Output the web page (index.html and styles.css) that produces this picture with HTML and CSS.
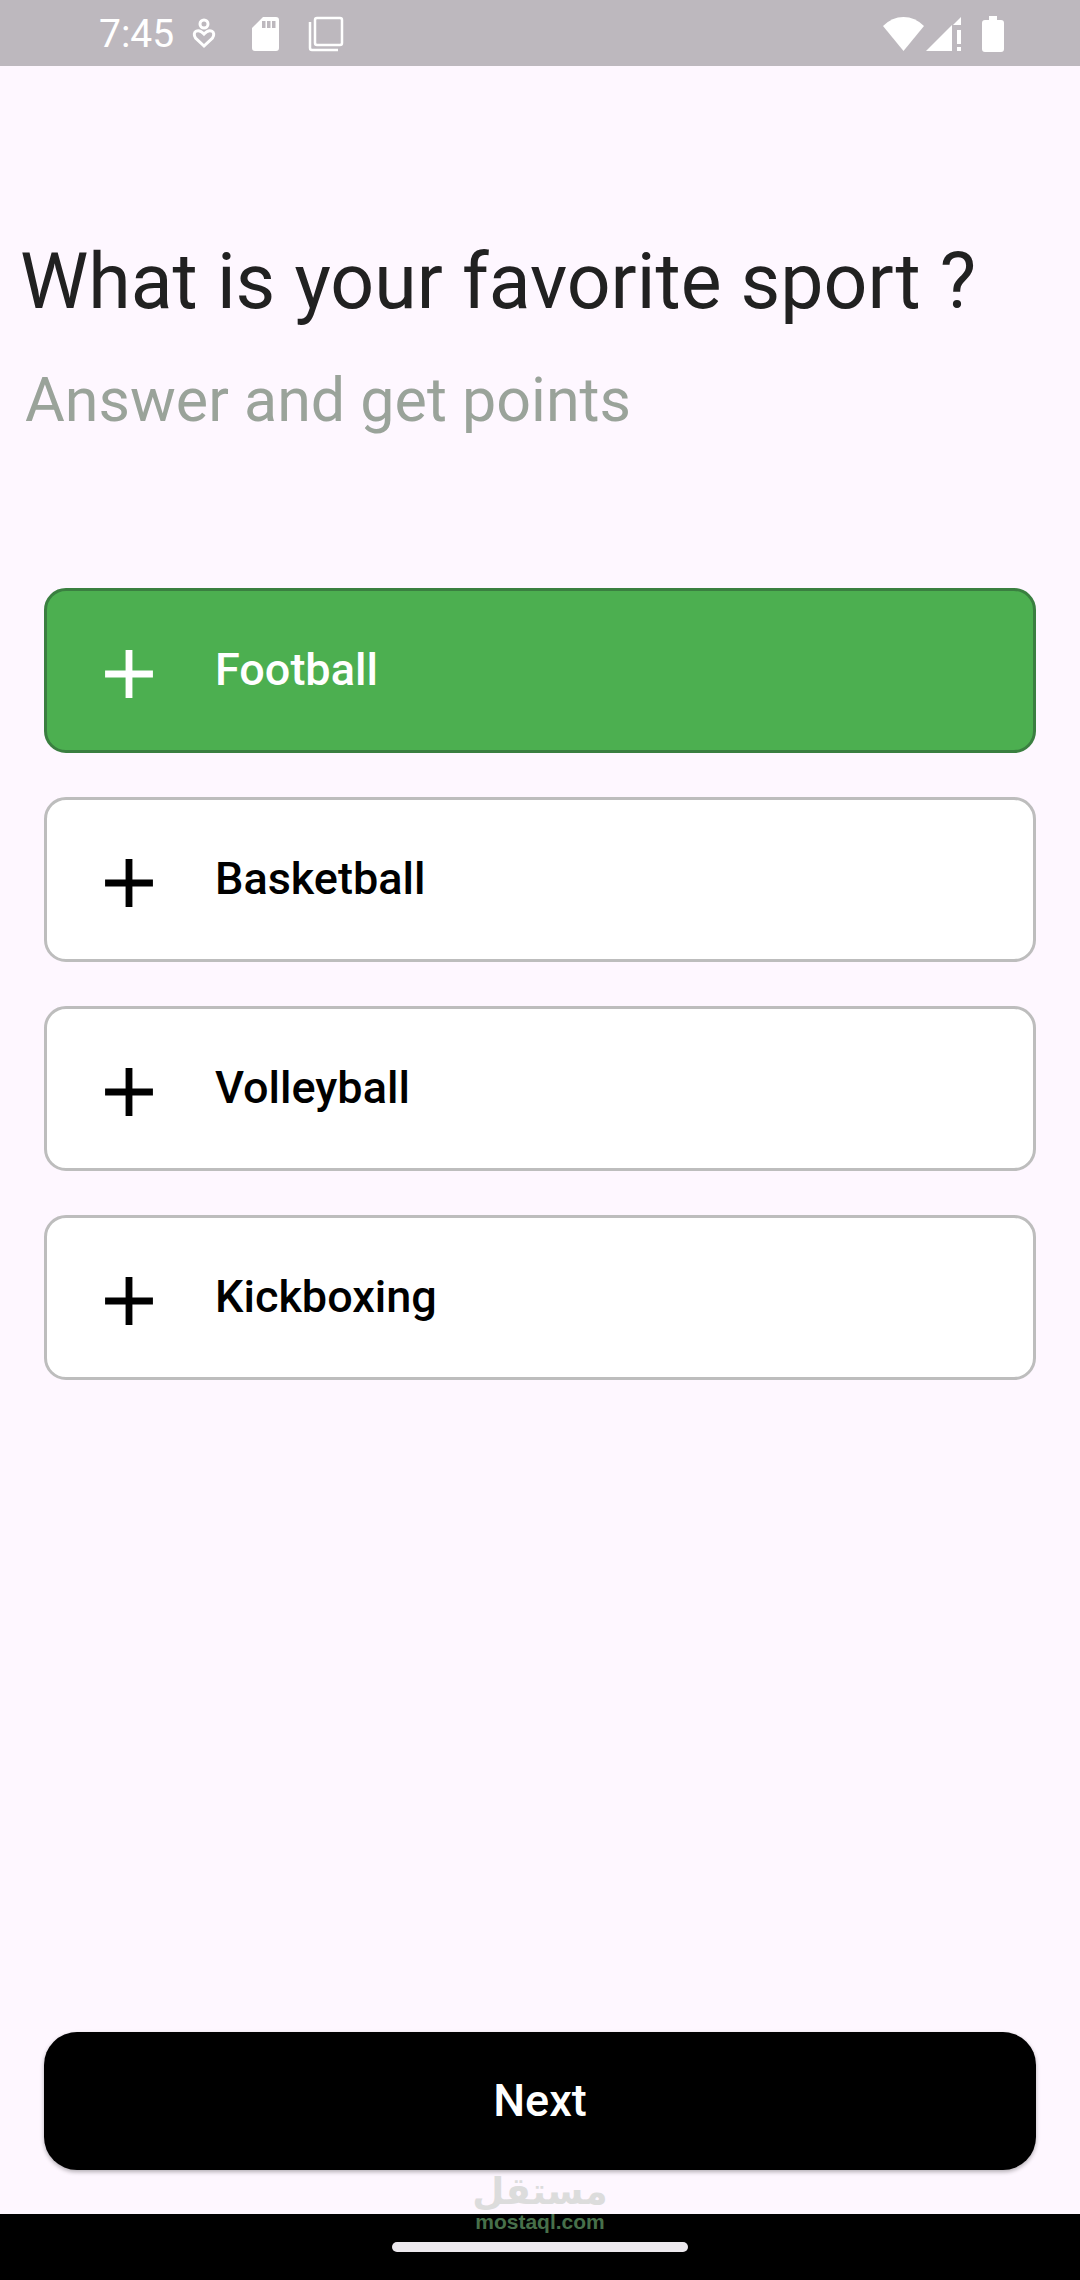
FILE: index.html
```html
<!DOCTYPE html>
<html lang="en">
<head>
<meta charset="utf-8">
<meta name="viewport" content="width=device-width, initial-scale=1">
<title>Favorite sport</title>
<link rel="stylesheet" href="styles.css">
</head>
<body class="screen">
<header class="status">
  <div class="status-left">
    <span class="clock">7:45</span>
    <svg class="heart" width="24" height="34" viewBox="0 0 24 34" fill="none" stroke="currentColor" stroke-width="3"><circle cx="12" cy="7" r="4"/><path d="M12 29 3.500 21C-.5 15 6 10.500 12 17 18 10.500 24.500 15 20.500 21Z"/></svg>
    <svg class="sd" width="28" height="36" viewBox="0 0 28 36" fill="currentColor"><path fill-rule="evenodd" d="M11 1H24Q27 1 27 4V32Q27 35 24 35H3Q0 35 0 32V12ZM10 5V12H13.500V5ZM15 5V12H18.500V5ZM20 5V12H23.500V5Z"/></svg>
    <svg class="frames" width="36" height="36" viewBox="0 0 36 36" fill="none" stroke="currentColor" stroke-width="2.500"><rect x="7" y="2" width="27" height="27" rx="2"/><path d="M2 6V32Q2 34 4 34H30"/></svg>
  </div>
  <div class="status-right">
    <svg width="41" height="36" viewBox="0 0 41 36" fill="currentColor"><path d="M0 10Q9 1 20.500 1T41 10L20.500 35Z"/></svg>
    <svg class="signal" width="36" height="36" viewBox="0 0 36 36" fill="currentColor"><path d="M0 35 26 9V35ZM35 1V9H27ZM31 14h4v14h-4ZM31 31h4v4h-4Z"/></svg>
    <svg class="battery" width="22" height="36" viewBox="0 0 22 36" fill="currentColor"><path d="M7 0h8v4h4q3 0 3 3v26q0 3-3 3H3q-3 0-3-3V7q0-3 3-3h4Z"/></svg>
  </div>
</header>
<main class="quiz">
  <h1 class="question">What is your favorite sport ?</h1>
  <p class="hint">Answer and get points</p>
  <div class="options">
    <button class="option selected" type="button"><svg class="plus" viewBox="0 0 24 24" fill="currentColor"><path d="M19 13h-6v6h-2v-6H5v-2h6V5h2v6h6z"/></svg><span class="label">Football</span></button>
    <button class="option" type="button"><svg class="plus" viewBox="0 0 24 24" fill="currentColor"><path d="M19 13h-6v6h-2v-6H5v-2h6V5h2v6h6z"/></svg><span class="label">Basketball</span></button>
    <button class="option" type="button"><svg class="plus" viewBox="0 0 24 24" fill="currentColor"><path d="M19 13h-6v6h-2v-6H5v-2h6V5h2v6h6z"/></svg><span class="label">Volleyball</span></button>
    <button class="option" type="button"><svg class="plus" viewBox="0 0 24 24" fill="currentColor"><path d="M19 13h-6v6h-2v-6H5v-2h6V5h2v6h6z"/></svg><span class="label">Kickboxing</span></button>
  </div>
  <button class="next" type="button">Next</button>
</main>
<footer class="nav">
  <div class="watermark"><span class="mark-ar" lang="ar" dir="rtl">مستقل</span><span class="mark-en">mostaql.com</span></div>
  <div class="handle"></div>
</footer>
</body>
</html>
```
FILE: styles.css
```css
* { box-sizing: border-box; }
.screen {
  margin: 0;
  min-height: 100vh;
  display: flex;
  flex-direction: column;
  background: #fef7ff;
  font-family: Roboto, sans-serif;
}
.status {
  display: flex;
  justify-content: space-between;
  align-items: center;
  height: 66px;
  padding: 2px 76px 0 99px;
  background: #bdb8be;
  color: #fff;
}
.status-left, .status-right { display: flex; align-items: center; }
.clock { font-size: 39px; line-height: 48px; }
.heart { margin-left: 18px; }
.sd { margin-left: 36px; }
.frames { margin-left: 28px; }
.signal { margin-left: 2px; }
.battery { margin-left: 20px; }
.quiz {
  flex: 1;
  display: flex;
  flex-direction: column;
  padding: 0 44px 44px;
}
.question {
  margin: 168px 0 0 -24px;
  font-size: 77px;
  line-height: 96px;
  font-weight: 400;
  color: #212121;
}
.hint {
  margin: 34px 0 0 -19px;
  font-size: 61px;
  line-height: 72px;
  color: #9aa39a;
}
.options {
  display: flex;
  flex-direction: column;
  gap: 44px;
  margin-top: 152px;
}
.option {
  display: flex;
  align-items: center;
  gap: 45px;
  height: 165px;
  padding: 0 40px 1px 41px;
  border: 3px solid #bdbdbd;
  border-radius: 22px;
  background: #fff;
  color: #000;
  font: 500 45px/52px Roboto, sans-serif;
  text-align: left;
}
.selected { background: #4caf50; border-color: #3a7f40; color: #fff; }
.plus { width: 82px; height: 82px; margin-top: 8px; }
.next {
  height: 138px;
  margin-top: auto;
  border: 0;
  border-radius: 33px;
  background: #000;
  color: #fff;
  font: 500 45px/52px Roboto, sans-serif;
  box-shadow: 0 2px 4px rgba(0, 0, 0, .3);
}
.nav {
  position: relative;
  display: flex;
  justify-content: center;
  height: 66px;
  padding-top: 28px;
  background: #000;
}
.handle { width: 296px; height: 10px; border-radius: 5px; background: #ece8ed; }
.watermark {
  position: absolute;
  bottom: 46px;
  left: 50%;
  width: 130px;
  margin-left: -65px;
  display: flex;
  flex-direction: column;
  align-items: center;
}
.mark-ar { font: 700 37px/36px "DejaVu Sans", sans-serif; color: #dcdcdc; }
.mark-en { font: 700 21px/24px "Liberation Sans", sans-serif; color: #47704a; }
```
